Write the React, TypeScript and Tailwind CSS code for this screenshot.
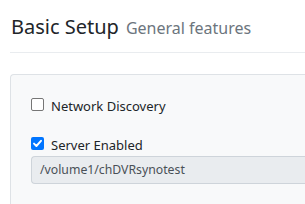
import React from "react";

function Box({ checked }: { checked: boolean }) {
  if (checked) {
    return (
      <span className="flex h-[13px] w-[13px] shrink-0 items-center justify-center rounded-[2px] bg-[#0075ff]">
        <svg width="11" height="11" viewBox="0 0 11 11">
          <path d="M2 5.6 L4.4 8 L9 2.8" fill="none" stroke="#fff" strokeWidth="1.9" strokeLinecap="round" strokeLinejoin="round" />
        </svg>
      </span>
    );
  }
  return <span className="h-[13px] w-[13px] shrink-0 rounded-[2px] border border-[#767676] bg-white" />;
}

export default function App() {
  return (
    <div className="h-[204px] w-[305px] overflow-hidden bg-white font-['Noto_Sans',sans-serif] text-[#212529]">
      <div className="pl-[11px] pt-[14px]">
        <div className="flex items-baseline gap-[7px] whitespace-nowrap">
          <span className="text-[20px] leading-[26px]">Basic Setup</span>
          <span className="text-[16px] text-[#6c757d]">General features</span>
        </div>
      </div>
      <div className="ml-[10px] mt-[12px] border-t border-[#e9ecef]" />
      <div className="ml-[10px] mt-[21px] h-[200px] rounded-tl-[4px] border-l border-t border-[#dee2e6] bg-[#f8f9fa] pl-[20px] pt-[23px]">
        <div className="flex items-start gap-[7px] text-[13px] leading-[16px]">
          <Box checked={false} />
          <span className="whitespace-nowrap">Network Discovery</span>
        </div>
        <div className="mt-[23px] flex items-start gap-[7px] text-[13px] leading-[16px]">
          <Box checked={true} />
          <span className="whitespace-nowrap">Server Enabled</span>
        </div>
        <div className="mt-[3px] flex h-[28px] items-center rounded-l-[4px] border-y border-l border-[#ced4da] bg-[#e9ecef] pl-[8px] text-[12.25px] text-[#495057] whitespace-nowrap">
          /volume1/chDVRsynotest
        </div>
      </div>
    </div>
  );
}
